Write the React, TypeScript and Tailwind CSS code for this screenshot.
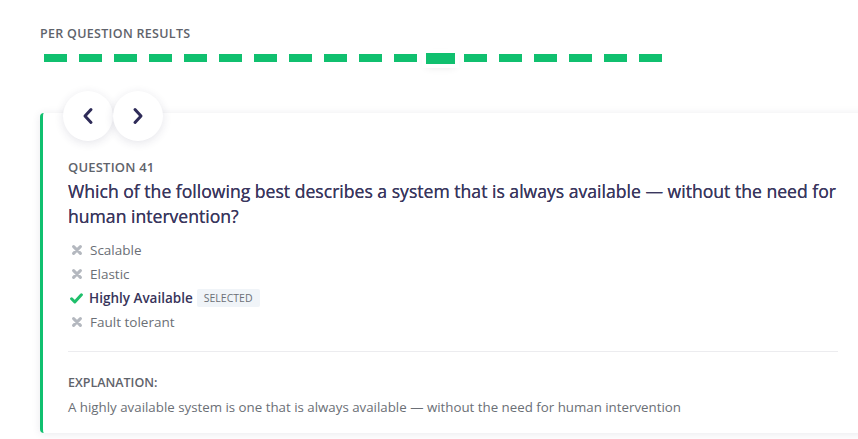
import React from "react";

const dashes = Array.from({ length: 18 }, (_, i) => i);

function Cross() {
  return (
    <svg width="10" height="10" viewBox="0 0 10 10" className="shrink-0">
      <path d="M1.6 1.6 L8.4 8.4 M8.4 1.6 L1.6 8.4" stroke="#b4b8bf" strokeWidth="3" strokeLinecap="round" />
    </svg>
  );
}

function Check() {
  return (
    <svg width="13" height="11" viewBox="0 0 13 11" className="shrink-0">
      <path d="M1.6 5.8 L4.8 9 L11.4 1.8" stroke="#1fbf6b" strokeWidth="3" fill="none" strokeLinecap="round" strokeLinejoin="round" />
    </svg>
  );
}

export default function App() {
  return (
    <div className="w-[858px] h-[439px] overflow-hidden bg-white text-[#6b6f76]" style={{ fontFamily: '"Open Sans", "Noto Sans", sans-serif' }}>
      <div className="pl-10 pt-[26px]">
        <div className="text-[12.5px] font-semibold tracking-[0.3px] text-[#5f636b] leading-[16px]">PER QUESTION RESULTS</div>
        <div className="flex items-center gap-3 pl-1 mt-[9px] h-[14px]">
          {dashes.map((i) =>
            i === 11 ? (
              <div key={i} className="w-[23px] h-[8px] flex items-center justify-center">
                <div className="w-[29px] h-[11px] bg-[#10c06f] shrink-0 shadow-[0_3px_8px_rgba(0,0,0,0.10)] outline outline-[4px] outline-white" />
              </div>
            ) : (
              <div key={i} className="w-[23px] h-[8px] bg-[#10c06f]" />
            )
          )}
        </div>
      </div>

      <div className="relative ml-10 mt-[48px] w-[830px]">
        <div className="absolute left-[23px] top-[-22px] flex z-10">
          <div className="w-[50px] h-[50px] rounded-full bg-white shadow-[0_2px_10px_rgba(40,40,80,0.12)] flex items-center justify-center">
            <svg width="14" height="18" viewBox="0 0 14 18"><path d="M10 2.5 L4 9 L10 15.5" stroke="#2e2b58" strokeWidth="3" fill="none" strokeLinecap="round" strokeLinejoin="round" /></svg>
          </div>
          <div className="w-[50px] h-[50px] rounded-full bg-white shadow-[0_2px_10px_rgba(40,40,80,0.12)] flex items-center justify-center">
            <svg width="14" height="18" viewBox="0 0 14 18"><path d="M4 2.5 L10 9 L4 15.5" stroke="#2e2b58" strokeWidth="3" fill="none" strokeLinecap="round" strokeLinejoin="round" /></svg>
          </div>
        </div>
        <div className="bg-white border-l-[3px] border-[#10c06f] rounded-l-[4px] shadow-[0_1px_8px_rgba(40,40,80,0.10)] pl-[25px] pr-[32px] pt-[45px] pb-[16px]">
          <div className="text-[13px] font-semibold text-[#5f636b] leading-[18px] tracking-[0.2px]">QUESTION 41</div>
          <div className="mt-[3px] mr-[-8px] text-[17.6px] font-medium text-[#3a375e] leading-[25px] [text-shadow:0_0_0.4px_#3a375e]">
            Which of the following best describes a system that is always available — without the need for human intervention?
          </div>
          <div className="mt-[9px] flex flex-col text-[13.5px] leading-[24px]">
            <div className="flex items-center gap-[8px] pl-[4px]"><Cross /><span className="text-[#6b6f76]">Scalable</span></div>
            <div className="flex items-center gap-[8px] pl-[4px]"><Cross /><span className="text-[#6b6f76]">Elastic</span></div>
            <div className="flex items-center gap-[6px] pl-[2px]">
              <Check />
              <span className="font-semibold text-[#37345a]">Highly Available</span>
              <span className="ml-[-2px] bg-[#f0f4f8] text-[10.5px] text-[#6b6f76] leading-[18px] px-[7px] rounded-[2px]">SELECTED</span>
            </div>
            <div className="flex items-center gap-[8px] pl-[4px]"><Cross /><span className="text-[#6b6f76]">Fault tolerant</span></div>
          </div>
          <div className="mt-[17px] border-t border-[#ececef]" />
          <div className="mt-[22px] text-[12.5px] font-semibold text-[#5f636b] leading-[18px]">EXPLANATION:</div>
          <div className="mt-[5px] text-[13.3px] text-[#6b6f76] leading-[20px]">
            A highly available system is one that is always available — without the need for human intervention
          </div>
        </div>
      </div>
    </div>
  );
}
